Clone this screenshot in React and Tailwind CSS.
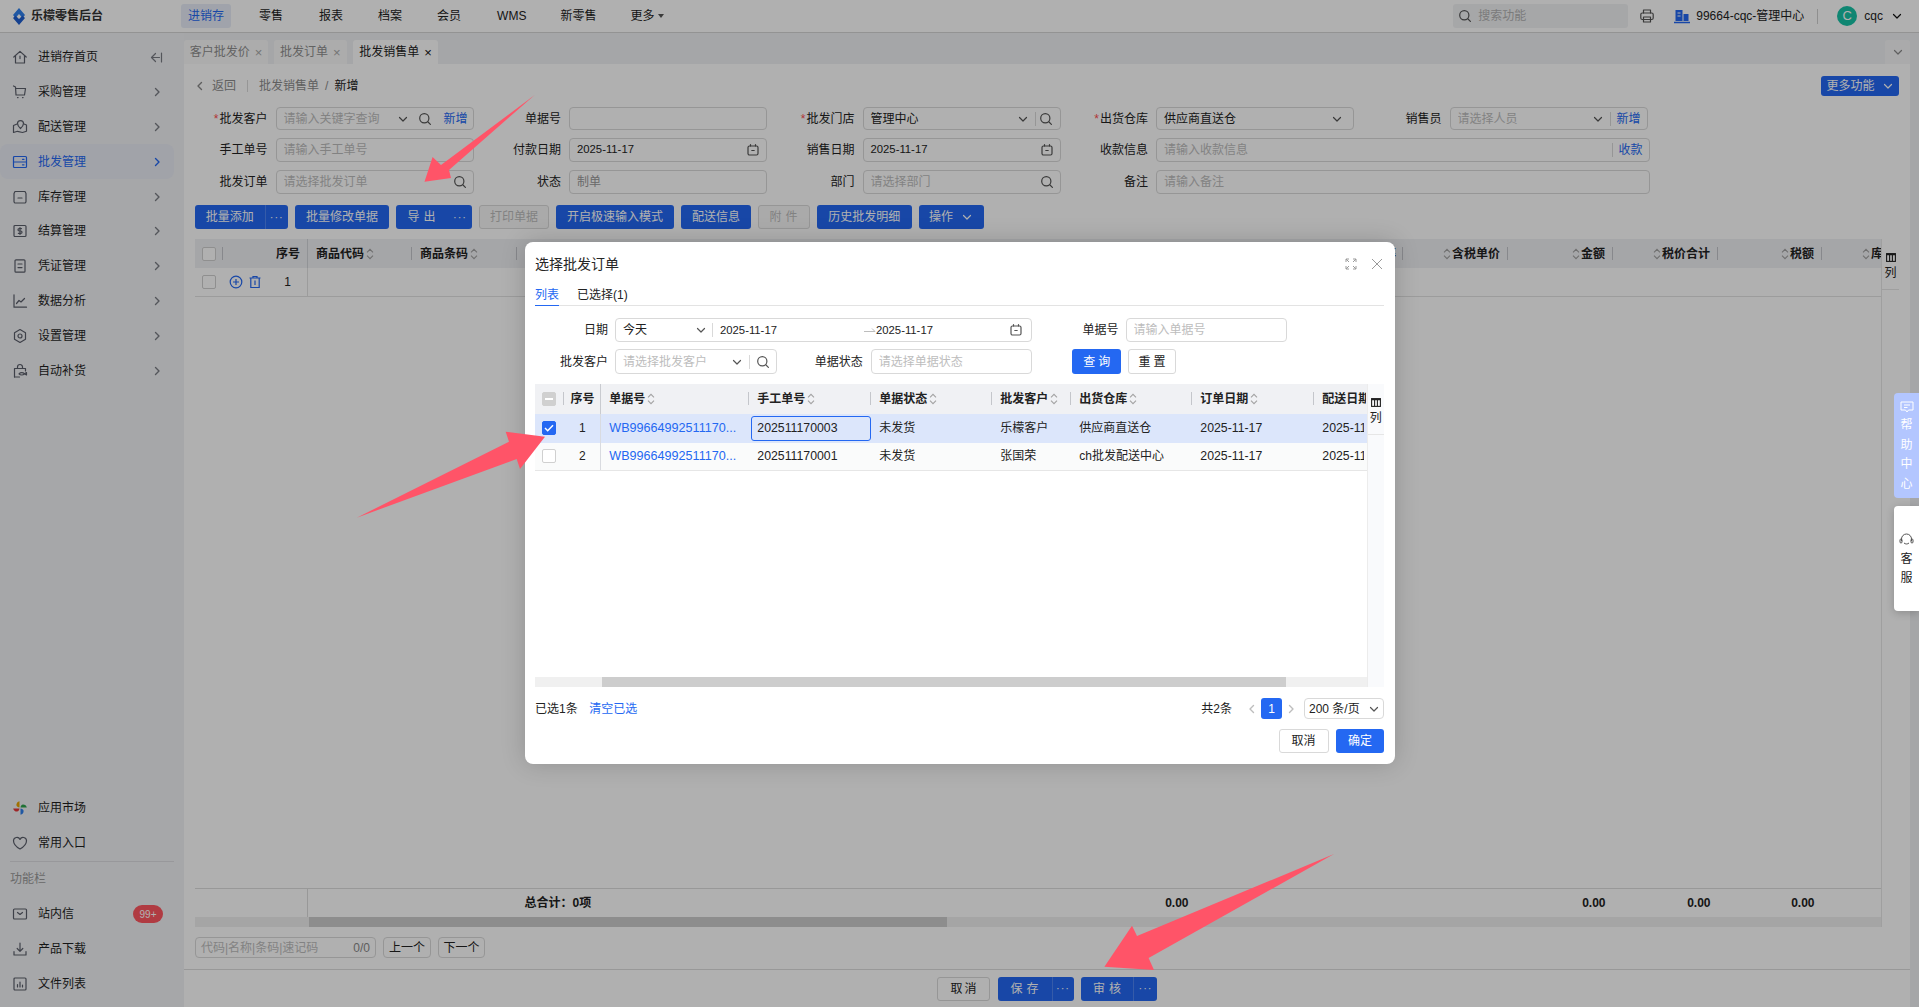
import React from "react";

const S = ({ children, className = "", size = 16, vb = "0 0 16 16" }) => (
  <svg width={size} height={size} viewBox={vb} fill="none" stroke="currentColor" strokeWidth="1.2" strokeLinecap="round" strokeLinejoin="round" className={"shrink-0 " + className}>{children}</svg>
);
const Chevron = ({ className = "" }) => <S size={12} vb="0 0 12 12" className={className}><path d="M2.5 4.5 6 8l3.5-3.5" /></S>;
const ChevR = ({ className = "" }) => <S size={12} vb="0 0 12 12" className={className}><path d="M4.5 2.5 8 6 4.5 9.5" strokeWidth="1.4" /></S>;
const Search = ({ className = "" }) => <S size={14} vb="0 0 14 14" className={className}><circle cx="6.3" cy="6.3" r="4.6" /><path d="m10 10 2.4 2.4" /></S>;
const Cal = ({ className = "" }) => <S size={14} vb="0 0 14 14" className={className}><rect x="2" y="3" width="10" height="9" rx="1.5" /><path d="M4.5 1.5V3M9.5 1.5V3M5.8 7.5h2.4" /></S>;
const Sort = () => (
  <svg width="8" height="12" viewBox="0 0 8 12" fill="none" stroke="#a3a3a3" strokeWidth="1.1" className="shrink-0"><path d="M1 4.4 4 1.4l3 3M1 7.6l3 3 3-3" /></svg>
);
const ColsIcon = () => (
  <svg width="10" height="9" viewBox="0 0 10 9" fill="none" stroke="#222" strokeWidth="1.1"><rect x=".6" y=".6" width="8.8" height="7.8" /><path d="M3.6 1v7M6.4 1v7M.6 1.6h8.8" /></svg>
);

const icons = {
  home: <><path d="M1.8 8 8 2.4 14.2 8" /><path d="M3.5 6.8V14h9V6.8" /><path d="M8 7v2.6" /></>,
  cart: <><path d="M1.5 2 3.5 3l.5 8h8.5l1-6.5H4" /><path d="M5.5 13.6h.6M10.5 13.6h.6" /></>,
  map: <><path d="M5 5 1.5 6.5v7l4-1.2 5 1.2 4-1.2V6L12 5" /><path d="M8.5 9.5S5.5 6.8 5.5 4.6a3 3 0 0 1 6 0c0 2.2-3 4.9-3 4.9Z" /></>,
  server: <><rect x="1.5" y="2.5" width="13" height="11" rx="1" /><path d="M1.5 8h13M10.5 5.3h1.5M10.5 10.8h1.5" /></>,
  box: <><path d="M3 2.5h10l1 2v8a1.5 1.5 0 0 1-1.5 1.5h-9A1.5 1.5 0 0 1 2 12.5v-8Z" /><path d="M6 9h4" /></>,
  dollar: <><rect x="2" y="2.5" width="12" height="11" rx="1" /><path d="M9.5 5.6H7.2a1.2 1.2 0 0 0 0 2.4h1.6a1.2 1.2 0 0 1 0 2.4H6.4M8 4.5v7" /></>,
  doc: <><rect x="3" y="1.8" width="10" height="12.4" rx="1" /><path d="M6 6h4M6 9.6h4" /></>,
  chart: <><path d="M2 1.8v12.4h12.5" /><path d="M4.5 10.5 7 7.5l2 1.5 3.5-3.5" /></>,
  hex: <><path d="m8 1.5 5.5 3.2v6.6L8 14.5l-5.5-3.2V4.7Z" /><circle cx="8" cy="8" r="2" /></>,
  bag: <><path d="M2.5 14V5.5h11V8M5.5 5.5V4a2.5 2.5 0 0 1 5 0v1.5" /><path d="M2.5 14h5M7 10.8c1.5-1.6 4-1.6 5.5 0-1.5 1.6-4 1.6-5.5 0Z" /><path d="m12.5 10.8 2-1.2v2.4Z" /></>,
  heart: <path d="M8 14S1.5 10.4 1.5 5.8A3.4 3.4 0 0 1 8 4.4a3.4 3.4 0 0 1 6.5 1.4C14.500 10.400 8 14 8 14Z" />,
  mail: <><rect x="1.500" y="3" width="13" height="10" rx="1" /><path d="M5.500 6.500 8 8.500l2.500-2" /></>,
  down: <><path d="M8 2v8M5.200 7.500 8 10.300l2.800-2.800M2 10.500V14h12v-3.500" /></>,
  bars: <><rect x="2" y="2" width="12" height="12" rx="1" /><path d="M5.500 8.500V11M8 6v5M10.500 9v2" /></>,
};

const Pin = () => (
  <svg width="16" height="16" viewBox="0 0 16 16" className="shrink-0">
    <path d="M7.500 7.500V1.200A4 4 0 0 0 4.400 5C4.500 6.500 6 7.400 7.500 7.500Z" fill="#e8a400" />
    <path d="M8.500 7.500h6.300A4 4 0 0 0 11 4.400C9.500 4.500 8.600 6 8.500 7.500Z" fill="#2da44e" />
    <path d="M8.500 8.500v6.300a4 4 0 0 0 3.100-3.800C11.500 9.500 10 8.600 8.500 8.500Z" fill="#2f80ed" />
    <path d="M7.500 8.500H1.200A4 4 0 0 0 5 11.600C6.500 11.500 7.400 10 7.500 8.500Z" fill="#e5383b" />
  </svg>
);

const NavRow = ({ icon, label, active, chevron = true, extra }) => (
  <div className={"h-[34.800px] w-[174px] flex items-center rounded-lg pl-[12px] pr-[11px] " + (active ? "bg-[#e9ecf5] text-[#2468f2]" : "text-[#1f1f1f]")}>
    <span className={active ? "text-[#2468f2]" : "text-[#5b5f6b]"}>{icon}</span>
    <span className="ml-[10px] flex-1 text-[12px]">{label}</span>
    {extra}
    {chevron && <ChevR className={active ? "text-[#2468f2]" : "text-[#7a7d85]"} />}
  </div>
);

const Sidebar = () => {
  const top = [["home", "进销存首页"], ["cart", "采购管理"], ["map", "配送管理"], ["server", "批发管理"], ["box", "库存管理"], ["dollar", "结算管理"], ["doc", "凭证管理"], ["chart", "数据分析"], ["hex", "设置管理"], ["bag", "自动补货"]];
  return (
    <aside className="w-[184px] shrink-0 bg-[#f1f2f5] flex flex-col pt-[7px] pb-[6px]">
      {top.map(([k, l], i) => (
        <NavRow key={l} icon={<S>{icons[k]}</S>} label={l} active={i === 3} chevron={i !== 0}
          extra={i === 0 ? <S size={13} vb="0 0 13 13" className="text-[#7a7d85]"><path d="M5.500 2.500 1.500 6.500l4 4M1.500 6.500h8M11.500 2v9" /></S> : null} />
      ))}
      <div className="mt-auto pt-[1px]">
        <NavRow icon={<Pin />} label="应用市场" chevron={false} />
        <NavRow icon={<S>{icons.heart}</S>} label="常用入口" chevron={false} />
        <div className="border-t border-[#dcdde1] ml-[10px] w-[164px] h-[1px]" />
        <div className="h-[35px] pl-[10px] flex items-center text-[12px] text-[#9a9a9a]">功能栏</div>
        <NavRow icon={<S>{icons.mail}</S>} label="站内信" chevron={false}
          extra={<span className="h-[18px] w-[30px] rounded-full bg-[#ff5660] text-white text-[10px] flex items-center justify-center">99+</span>} />
        <NavRow icon={<S>{icons.down}</S>} label="产品下载" chevron={false} />
        <NavRow icon={<S>{icons.bars}</S>} label="文件列表" chevron={false} />
      </div>
    </aside>
  );
};

const TopBar = () => (
  <header className="h-[33px] shrink-0 border-b border-[#d6d6d6] bg-white flex items-center text-[12px] text-[#222]">
    <div className="w-[181px] flex items-center pl-[12px] shrink-0">
      <svg width="14" height="17" viewBox="0 0 14 17" className="shrink-0">
        <path d="M7 0 1 7l2.500 3L7 6l3.500 4L13 7Z" fill="#2f80ed" />
        <path d="M7 17l6-7-2.500-2.500L7 11 3.500 7.500 1 10Z" fill="#1f5fd0" />
      </svg>
      <span className="ml-[5px] font-bold text-[#333]">乐檬零售后台</span>
    </div>
    <nav className="flex items-center">
      <span className="h-[24px] w-[50px] rounded-[3px] bg-[#e8edf8] text-[#2468f2] flex items-center justify-center">进销存</span>
      {[["零售", "ml-[28px]"], ["报表", "ml-[36px]"], ["档案", "ml-[35px]"], ["会员", "ml-[35px]"], ["WMS", "ml-[36px]"], ["新零售", "ml-[34px]"], ["更多", "ml-[34px]"]].map(([t, c]) => (
        <span key={t} className={c}>{t}</span>
      ))}
      <svg width="6" height="4" viewBox="0 0 6 4" className="ml-[4px]"><path d="M0 0h6L3 4Z" fill="#555" /></svg>
    </nav>
    <div className="ml-auto flex items-center">
      <div className="h-[24px] w-[175px] rounded-[3px] bg-[#f1f2f4] flex items-center pl-[5px] text-[#b3b3b3]">
        <Search className="text-[#555]" />
        <span className="ml-[6px]">搜索功能</span>
      </div>
      <S size={16} className="ml-[11px] text-[#555]"><path d="M4.500 5V2h7v3" /><rect x="1.800" y="5" width="12.400" height="6.500" rx="1.500" /><rect x="4.500" y="9" width="7" height="5" /></S>
      <svg width="16" height="15" viewBox="0 0 16 15" className="ml-[19px]"><path d="M1.500 1h7v11h-7ZM9.500 5h5v7h-5Z" fill="#2468f2" /><path d="M0 13.500h16" stroke="#2468f2" strokeWidth="1.500" /><path d="M3.500 4h3M3.500 7h3" stroke="#fff" /></svg>
      <span className="ml-[6px] whitespace-nowrap">99664-cqc-管理中心</span>
      <span className="ml-[13px] h-[15px] border-l border-[#cfcfcf]" />
      <span className="ml-[19px] h-[20px] w-[20px] rounded-full bg-[#17c2a6] text-white text-[13px] flex items-center justify-center">C</span>
      <span className="ml-[7px]">cqc</span>
      <Chevron className="ml-[8px] mr-[16px] text-[#111]" />
    </div>
  </header>
);

const Tab = ({ label, w, active }) => (
  <div className={"h-[24px] flex items-center justify-center gap-[5px] rounded-t-[3px] text-[12px] " + w + " " + (active ? "bg-white text-[#222]" : "bg-[#fafafa] text-[#8f8f8f]")}>
    <span>{label}</span><span className={"text-[13px] leading-none " + (active ? "text-[#111]" : "text-[#a8a8a8]")}>×</span>
  </div>
);

const Box = ({ w, children, className = "" }) => (
  <div className={"h-full border border-[#d9d9d9] rounded-[4px] bg-white flex items-center text-[12px] pl-[7px] pr-[6px] " + w + " " + className}>{children}</div>
);
const Ph = ({ children }) => <span className="flex-1 min-w-0 text-[#bdbdbd] whitespace-nowrap overflow-hidden">{children}</span>;
const Val = ({ children, date }) => <span className={"flex-1 min-w-0 text-[#222] whitespace-nowrap " + (date ? "text-[11.300px]" : "")}>{children}</span>;
const Sep = ({ className = "" }) => <span className={"h-[14px] border-l border-[#d9d9d9] " + className} />;

const Field = ({ label, req, children }) => (
  <div className="flex items-center h-full">
    <div className="w-[72.500px] mr-[8px] text-right text-[12px] text-[#222] whitespace-nowrap">
      {req && <span className="text-[#ff4d4f] mr-[1px]">*</span>}{label}
    </div>
    {children}
  </div>
);

const Form = () => (
  <div className="mt-[11px] grid grid-cols-[repeat(5,293.500px)] grid-rows-[23px_24.500px_24.500px] gap-y-[7.500px]">
    <Field label="批发客户" req>
      <Box w="w-[198px]"><Ph>请输入关键字查询</Ph><Chevron className="text-[#555] mr-[9px]" /><Search className="text-[#555] mr-[11px]" /><span className="text-[#2468f2] mr-[-1px]">新增</span></Box>
    </Field>
    <Field label="单据号"><Box w="w-[198px]" /></Field>
    <Field label="批发门店" req>
      <Box w="w-[198px]" className="pr-[1px]"><Val>管理中心</Val><Chevron className="text-[#555] mr-[6px]" /><Sep /><Search className="text-[#555] ml-[3px] mr-[1px]" /></Box>
    </Field>
    <Field label="出货仓库" req><Box w="w-[198px]"><Val>供应商直送仓</Val><Chevron className="text-[#555] mr-[4px]" /></Box></Field>
    <Field label="销售员">
      <Box w="w-[198px]"><Ph>请选择人员</Ph><Chevron className="text-[#555] mr-[6px]" /><Sep className="mr-[5px]" /><span className="text-[#2468f2]">新增</span></Box>
    </Field>

    <Field label="手工单号"><Box w="w-[198px]"><Ph>请输入手工单号</Ph></Box></Field>
    <Field label="付款日期"><Box w="w-[198px]"><Val date>2025-11-17</Val><Cal className="text-[#555]" /></Box></Field>
    <Field label="销售日期"><Box w="w-[198px]"><Val date>2025-11-17</Val><Cal className="text-[#555]" /></Box></Field>
    <div className="col-span-2">
      <Field label="收款信息"><Box w="w-[493.500px]"><Ph>请输入收款信息</Ph><Sep className="mr-[5px]" /><span className="text-[#2468f2]">收款</span></Box></Field>
    </div>

    <Field label="批发订单"><Box w="w-[198px]"><Ph>请选择批发订单</Ph><Search className="text-[#555]" /></Box></Field>
    <Field label="状态"><Box w="w-[198px]"><span className="text-[#9a9a9a]">制单</span></Box></Field>
    <Field label="部门"><Box w="w-[198px]"><Ph>请选择部门</Ph><Search className="text-[#555]" /></Box></Field>
    <div className="col-span-2">
      <Field label="备注"><Box w="w-[493.500px]"><Ph>请输入备注</Ph></Box></Field>
    </div>
  </div>
);

const Dots = () => <span className="tracking-[1px] text-[11px] leading-none">···</span>;
const Btn = ({ w, children }) => <div className={"h-full rounded-[3px] bg-[#2468f2] text-white text-[12px] flex items-center justify-center whitespace-nowrap " + w}>{children}</div>;
const Split = ({ w, main, side, children, sep = true }) => (
  <div className={"h-full rounded-[3px] bg-[#2468f2] text-white text-[12px] flex items-center " + w}>
    <span className={"h-full flex items-center justify-center " + main}>{children}</span>
    <span className={"h-full flex items-center justify-center " + side + (sep ? " border-l border-[#4d85f5]" : "")}><Dots /></span>
  </div>
);
const Dis = ({ w, children }) => <div className={"h-full rounded-[3px] border border-[#d9d9d9] bg-[#f7f7f7] text-[#bcbcbc] text-[12px] flex items-center justify-center " + w}>{children}</div>;

const Toolbar = () => (
  <div className="mt-[11px] h-[24px] flex gap-[7px]">
    <Split w="w-[93px]" main="w-[69.500px]" side="w-[23.500px]">批量添加</Split>
    <Btn w="w-[94px]">批量修改单据</Btn>
    <Split w="w-[76px]" main="w-[52px] pl-[3px]" side="w-[24px]" sep={false}><span className="tracking-[4px]">导出</span></Split>
    <Dis w="w-[70px]">打印单据</Dis>
    <Btn w="w-[118px]">开启极速输入模式</Btn>
    <Btn w="w-[70px]">配送信息</Btn>
    <Dis w="w-[52px]"><span className="tracking-[4px] pl-[3px]">附件</span></Dis>
    <Btn w="w-[94.500px]">历史批发明细</Btn>
    <div className="h-full w-[65px] rounded-[3px] bg-[#2468f2] text-white text-[12px] flex items-center justify-center gap-[8px]"><span>操作</span><Chevron /></div>
  </div>
);

const Bar = () => <span className="h-[13px] border-l border-[#c4c6cb]" />;
const Check = ({ checked, mixed }) => (
  <span className={"h-[14px] w-[14px] rounded-[2px] flex items-center justify-center shrink-0 border " + (checked ? "bg-[#2468f2] border-[#2468f2]" : mixed ? "bg-[#d0d0d0] border-[#d0d0d0]" : "bg-white border-[#d0d0d0]")}>
    {checked && <svg width="10" height="8" viewBox="0 0 10 8" fill="none" stroke="#fff" strokeWidth="1.500"><path d="M1 4l2.700 2.700L9 1.200" /></svg>}
    {mixed && <span className="h-[1.500px] w-[8px] bg-white" />}
  </span>
);

const NumHead = ({ label, w = "w-[105px]" }) => (
  <div className={"h-full flex items-center justify-end gap-[1px] shrink-0 " + w}>
    <Sort /><span className="whitespace-nowrap">{label}</span><span className="ml-[6px] flex items-center"><Bar /></span>
  </div>
);

const PageTable = () => (
  <div className="mt-[10px] flex-1 min-h-0 flex">
    <div className="flex-1 min-w-0 flex flex-col">
      <div className="h-[29px] shrink-0 bg-[#f0f1f4] flex items-center text-[12px] font-semibold text-[#222] overflow-hidden">
        <div className="w-[113px] h-full shrink-0 border-r border-[#d3d5da] flex items-center pl-[7px]">
          <Check /><span className="ml-[5.500px] flex items-center"><Bar /></span><span className="ml-auto mr-[7px]">序号</span>
        </div>
        <div className="w-[104px] shrink-0 flex items-center pl-[8px] gap-[2px]"><span>商品代码</span><Sort /><span className="ml-auto flex items-center"><Bar /></span></div>
        <div className="w-[105px] shrink-0 flex items-center pl-[8px] gap-[2px]"><span>商品条码</span><Sort /><span className="ml-auto flex items-center"><Bar /></span></div>
        <div className="flex-1 min-w-0 h-full flex items-center justify-end gap-[6px]"><span>税率</span><Bar /></div>
        <NumHead label="含税单价" />
        <NumHead label="金额" />
        <NumHead label="税价合计" />
        <NumHead label="税额" w="w-[104px]" />
        <div className="w-[59px] shrink-0 pl-[40px] flex items-center gap-[1px] whitespace-nowrap"><Sort /><span>库</span></div>
      </div>
      <div className="h-[28.500px] shrink-0 border-b border-[#e3e3e3] flex text-[12px]">
        <div className="w-[113px] h-full border-r border-[#e3e3e3] flex items-center pl-[7px] text-[#222]">
          <Check />
          <svg width="14" height="14" viewBox="0 0 14 14" fill="none" stroke="#2468f2" strokeWidth="1.200" className="ml-[13px]"><circle cx="7" cy="7" r="5.800" /><path d="M7 4v6M4 7h6" /></svg>
          <svg width="14" height="14" viewBox="0 0 14 14" fill="none" stroke="#2468f2" strokeWidth="1.200" className="ml-[5px]"><path d="M1.500 3h11M5 3V1.500h4V3M2.800 3v9.500h8.400V3M7 5.500v4.500" /></svg>
          <span className="ml-auto mr-[16px]">1</span>
        </div>
      </div>
      <div className="flex-1 min-h-0" />
      <div className="h-[29px] shrink-0 border-t border-[#dcdcdc] flex items-center text-[12px] font-semibold text-[#222]">
        <div className="w-[113px] h-full border-r border-[#dcdcdc] shrink-0" />
        <div className="w-[880.500px] shrink-0 flex justify-between pl-[216.500px]"><span>总合计：0项</span><span>0.00</span></div>
        <div className="w-[417px] shrink-0 text-right">0.00</div>
        <div className="w-[105px] shrink-0 text-right">0.00</div>
        <div className="w-[104px] shrink-0 text-right">0.00</div>
      </div>
      <div className="h-[10px] shrink-0 bg-[#f0f0f0] flex">
        <div className="ml-[114px] w-[638px] h-full bg-[#cdcdcd]" />
      </div>
    </div>
    <div className="w-[18px] shrink-0 border-l border-[#e6e6e6]">
      <div className="h-[51px] border-b border-[#e6e6e6] flex flex-col items-center pt-[14px] text-[12px] leading-[15px] text-[#222]"><ColsIcon /><span className="mt-[4px]">列</span></div>
    </div>
  </div>
);

const Finder = () => (
  <div className="mt-[10px] mb-[11px] h-[21px] shrink-0 flex text-[12px]">
    <div className="w-[181px] h-full border border-[#d9d9d9] rounded-[4px] flex items-center px-[5px]">
      <span className="flex-1 text-[#bdbdbd] whitespace-nowrap">代码|名称|条码|速记码</span><span className="text-[#888]">0/0</span>
    </div>
    <div className="ml-[7px] w-[48px] h-full border border-[#d9d9d9] rounded-[4px] flex items-center justify-center text-[#222]">上一个</div>
    <div className="ml-[7px] w-[47px] h-full border border-[#d9d9d9] rounded-[4px] flex items-center justify-center text-[#222]">下一个</div>
  </div>
);

const Footer = () => (
  <footer className="h-[38px] shrink-0 border-t border-[#dcdcdc] flex items-center justify-center gap-[7.500px]">
    <div className="h-[24px] w-[53px] border border-[#d9d9d9] rounded-[3px] flex items-center justify-center text-[12px] text-[#222] tracking-[2px] pl-[2px]">取消</div>
    <Split w="h-[24px]! w-[76px]" main="w-[54px] tracking-[4px] pl-[4px]" side="w-[22px]">保存</Split>
    <Split w="h-[24px]! w-[76px]" main="w-[52px] tracking-[4px] pl-[4px]" side="w-[24px]">审核</Split>
  </footer>
);

const MH = ({ w, label, sort = true, clip }) => (
  <div className={"h-full shrink-0 flex items-center pl-[8px] gap-[2px] " + w + (clip ? " overflow-hidden whitespace-nowrap" : "")}>
    <span className="whitespace-nowrap">{label}</span>{sort && <Sort />}{!clip && <span className="ml-auto flex items-center"><Bar /></span>}
  </div>
);
const MC = ({ w, children, className = "" }) => <div className={"h-full shrink-0 flex items-center pl-[8px] whitespace-nowrap overflow-hidden " + w + " " + className}>{children}</div>;

const MRow = ({ n, checked, wb, manual, focus, cust, wh, bg, h }) => (
  <div className={"flex items-center text-[12px] text-[#222] shrink-0 overflow-hidden " + bg + " " + h}>
    <div className="w-[66.300px] h-full shrink-0 flex items-center pl-[7px] border-r border-[#d9dbe0]">
      <Check checked={checked} /><span className="ml-auto mr-[14.500px]">{n}</span>
    </div>
    <MC w="w-[148px]" className="text-[#2468f2] text-[12.600px]">{wb}</MC>
    <div className="w-[122px] h-full shrink-0 flex items-center pl-[2px] text-[12.300px]">
      {focus
        ? <span className="h-[25px] w-[119.500px] rounded-[3px] border border-[#2468f2] flex items-center pl-[5px]">{manual}</span>
        : <span className="pl-[6px]">{manual}</span>}
    </div>
    <MC w="w-[121px]">未发货</MC>
    <MC w="w-[79px]">{cust}</MC>
    <MC w="w-[121px]">{wh}</MC>
    <MC w="w-[122px]" className="text-[12.300px]">2025-11-17</MC>
    <MC w="w-[50px]" className="text-[12.300px]">2025-11-17</MC>
  </div>
);

const Modal = () => (
  <div className="absolute left-[525px] top-[242px] z-20 w-[870px] h-[522px] bg-white rounded-[8px] shadow-[0_0_24px_rgba(0,0,0,0.18)] pl-[10px] pr-[11px] flex flex-col text-[12px] text-[#222]">
    <div className="h-[44px] shrink-0 flex items-center">
      <span className="text-[14px] text-[#262626]">选择批发订单</span>
      <svg width="12" height="12" viewBox="0 0 12 12" fill="none" stroke="#9a9a9a" className="ml-auto"><path d="M1 4V1h3M8 1h3v3M11 8v3H8M4 11H1V8M1 1l3 3M11 1 8 4M11 11 8 8M1 11l3-3" /></svg>
      <svg width="14" height="14" viewBox="0 0 14 14" fill="none" stroke="#9a9a9a" className="ml-[13px]"><path d="m2 2 10 10M12 2 2 12" /></svg>
    </div>
    <div className="h-[20px] shrink-0 border-b border-[#e3e3e3] flex">
      <span className="h-[20px] text-[#2468f2] border-b-[1px] border-[#2468f2]">列表</span>
      <span className="ml-[18px]">已选择(1)</span>
    </div>
    <div className="mt-[12px] h-[24px] shrink-0 flex items-center">
      <span className="w-[73px] text-right mr-[7px]">日期</span>
      <div className="h-full w-[416.500px] border border-[#d9d9d9] rounded-[4px] flex items-center pl-[7px] pr-[8px]">
        <span className="w-[72px]">今天</span><Chevron className="text-[#555]" /><Sep className="ml-[5px]" />
        <span className="ml-[7px] text-[11.300px] w-[144px]">2025-11-17</span>
        <svg width="12" height="6" viewBox="0 0 12 6" fill="none" stroke="#bdbdbd" className="shrink-0"><path d="M0 4.500h11L8 1.500" /></svg>
        <span className="flex-1 text-[11.300px] ml-[0px]">2025-11-17</span>
        <Cal className="text-[#555]" />
      </div>
      <span className="w-[87px] text-right mr-[7px]">单据号</span>
      <div className="h-full w-[161px] border border-[#d9d9d9] rounded-[4px] flex items-center pl-[7px]"><Ph>请输入单据号</Ph></div>
    </div>
    <div className="mt-[7px] h-[25px] shrink-0 flex items-center">
      <span className="w-[73px] text-right mr-[7px]">批发客户</span>
      <div className="h-full w-[161.500px] border border-[#d9d9d9] rounded-[4px] flex items-center pl-[7px]">
        <Ph>请选择批发客户</Ph><Chevron className="text-[#555] mr-[6px]" /><Sep /><Search className="text-[#555] ml-[6px] mr-[6px]" />
      </div>
      <span className="w-[86.300px] text-right mr-[8px]">单据状态</span>
      <div className="h-full w-[161px] border border-[#d9d9d9] rounded-[4px] flex items-center pl-[7px]"><Ph>请选择单据状态</Ph></div>
      <div className="ml-[40.500px] h-full w-[49px] rounded-[3px] bg-[#2468f2] text-white flex items-center justify-center tracking-[3px] pl-[3px]">查询</div>
      <div className="ml-[7px] h-full w-[47.500px] border border-[#d9d9d9] rounded-[3px] flex items-center justify-center tracking-[3px] pl-[3px]">重置</div>
    </div>
    <div className="mt-[10px] h-[303px] shrink-0 flex">
      <div className="w-[831.700px] shrink-0 flex flex-col overflow-hidden">
        <div className="h-[29.700px] shrink-0 bg-[#f0f1f4] flex items-center font-semibold overflow-hidden">
          <div className="w-[66.300px] h-full shrink-0 flex items-center pl-[7px] border-r border-[#c9cbd0]">
            <Check mixed /><span className="ml-[6.500px] flex items-center"><Bar /></span><span className="ml-[7px]">序号</span>
          </div>
          <MH w="w-[148px]" label="单据号" />
          <MH w="w-[122px]" label="手工单号" />
          <MH w="w-[121px]" label="单据状态" />
          <MH w="w-[79px]" label="批发客户" />
          <MH w="w-[121px]" label="出货仓库" />
          <MH w="w-[122px]" label="订单日期" />
          <MH w="w-[52px]" label="配送日期" sort={false} clip />
        </div>
        <MRow n="1" checked wb="WB99664992511170..." manual="202511170003" focus cust="乐檬客户" wh="供应商直送仓" bg="bg-[#dce6fb]" h="h-[29px]" />
        <div className="border-b border-[#e6e6e6] shrink-0">
          <MRow n="2" wb="WB99664992511170..." manual="202511170001" cust="张国荣" wh="ch批发配送中心" bg="bg-[#fafbfb]" h="h-[27px]" />
        </div>
        <div className="flex-1 min-h-0" />
        <div className="h-[10px] shrink-0 bg-[#f0f0f0]">
          <div className="ml-[67px] w-[684px] h-full bg-[#cdcdcd]" />
        </div>
      </div>
      <div className="flex-1 bg-[#f9fafc] border-l border-[#ececec]">
        <div className="h-[51px] border-b border-[#e6e6e6] flex flex-col items-center pt-[14px] leading-[15px]"><ColsIcon /><span className="mt-[4px]">列</span></div>
      </div>
    </div>
    <div className="mt-[11px] h-[21px] shrink-0 flex items-center">
      <span>已选1条</span><span className="ml-[11.500px] text-[#2468f2]">清空已选</span>
      <span className="ml-auto">共2条</span>
      <ChevR className="ml-[14px] rotate-180 text-[#bdbdbd]" />
      <span className="ml-[3px] h-[21px] w-[21px] rounded-[3px] bg-[#2468f2] text-white flex items-center justify-center">1</span>
      <ChevR className="ml-[3px] text-[#bdbdbd]" />
      <div className="ml-[7px] h-[21px] w-[80px] border border-[#d9d9d9] rounded-[4px] flex items-center pl-[4px] pr-[3px] whitespace-nowrap"><span className="flex-1">200 条/页</span><Chevron className="text-[#555]" /></div>
    </div>
    <div className="mt-[10px] h-[24px] shrink-0 flex justify-end gap-[7.500px]">
      <div className="h-full w-[50px] border border-[#d9d9d9] rounded-[3px] flex items-center justify-center">取消</div>
      <div className="h-full w-[48px] rounded-[3px] bg-[#2468f2] text-white flex items-center justify-center">确定</div>
    </div>
  </div>
);

const Arrows = () => (
  <svg width="1919" height="1007" viewBox="0 0 1919 1007" className="absolute left-0 top-0 z-30 pointer-events-none">
    <polygon fill="#ff5468" points="534.700,95 441,165 432.600,157 424.500,181.700 451,178 449,170" />
    <polygon fill="#ff5468" points="356.700,517.700 509,441.700 505.700,431.700 545,436.700 520,469 516.700,459" />
    <polygon fill="#ff5468" points="1334,854 1137,936 1132,925.700 1104.400,966.700 1154,970 1148.600,958" />
  </svg>
);

const Floats = () => (
  <div className="absolute right-0 top-[393px] z-20 w-[25px] flex flex-col gap-[8px] text-[12px]">
    <div className="h-[105px] rounded-l-[4px] bg-[#b3c6ff] text-white flex flex-col items-center pt-[8px]">
      <svg width="14" height="12" viewBox="0 0 14 12" fill="none" stroke="#fff" strokeWidth="1"><path d="M1 1h12v8H8.500L7 11 5.500 9H1Z" /><path d="M4 4h6M4 6.500h3.500" /></svg>
      <div className="mt-[3px] leading-[19.500px] text-center">帮<br />助<br />中<br />心</div>
    </div>
    <div className="h-[105px] rounded-l-[4px] bg-white shadow-[0_2px_8px_rgba(0,0,0,0.2)] text-[#222] flex flex-col items-center pt-[27px]">
      <svg width="15" height="14" viewBox="0 0 15 14" fill="none" stroke="#555" strokeWidth="1"><path d="M2.500 8V6a5 5 0 0 1 10 0v2" /><rect x="1" y="6" width="2" height="4" rx="1" /><rect x="12" y="6" width="2" height="4" rx="1" /><path d="M5 10c1.500 1.300 3.500 1.300 5 0" /></svg>
      <div className="mt-[3px] leading-[19px] text-center">客<br />服</div>
    </div>
  </div>
);

export default function App() {
  return (
    <div className="relative h-screen w-full overflow-hidden bg-white flex flex-col [font-family:'Liberation_Sans','Noto_Sans_CJK_SC',sans-serif]">
      <TopBar />
      <div className="flex-1 min-h-0 flex">
        <Sidebar />
        <main className="flex-1 min-w-0 flex flex-col bg-[#eff1f3]">
          <div className="h-[31px] shrink-0 flex items-end pr-[9px]">
            <Tab label="客户批发价" w="w-[84px]" />
            <div className="w-[5.500px]" />
            <Tab label="批发订单" w="w-[73.500px]" />
            <div className="w-[6px]" />
            <Tab label="批发销售单" w="w-[85px]" active />
            <div className="ml-auto h-[24px] w-[25px] rounded-t-[3px] bg-[#f7f7f8] text-[#8a8a8a] flex items-center justify-center"><Chevron /></div>
          </div>
          <div className="flex-1 min-h-0 flex">
            <div className="flex-1 min-w-0 bg-white flex flex-col">
              <div className="flex-1 min-h-0 flex flex-col pl-[11px] pr-[11px]">
                <div className="pt-[12px] h-[32px] shrink-0 flex items-center text-[12px]">
                  <ChevR className="rotate-180 text-[#888] ml-[-1px]" />
                  <span className="ml-[6px] text-[#8c8c8c]">返回</span>
                  <span className="ml-[11px] h-[12px] border-l border-[#d9d9d9]" />
                  <span className="ml-[11px] text-[#8c8c8c]">批发销售单</span>
                  <span className="ml-[6px] text-[#8c8c8c]">/</span>
                  <span className="ml-[6px] text-[#222]">新增</span>
                  <div className="ml-auto h-[20px] w-[78px] rounded-[3px] bg-[#2468f2] text-white flex items-center justify-center gap-[7px]"><span>更多功能</span><Chevron /></div>
                </div>
                <Form />
                <Toolbar />
                <PageTable />
                <Finder />
              </div>
              <Footer />
            </div>
            <div className="w-[9px] shrink-0" />
          </div>
        </main>
      </div>
      <div className="absolute inset-0 z-10 bg-[rgba(0,0,0,0.31)]" />
      <Modal />
      <Floats />
      <Arrows />
    </div>
  );
}
